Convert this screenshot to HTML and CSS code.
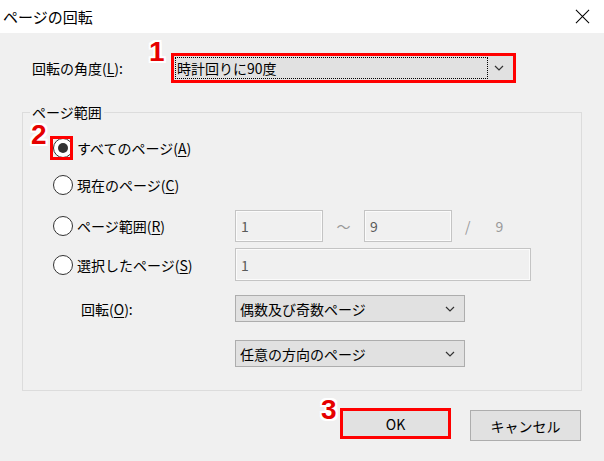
FILE: index.html
```html
<!DOCTYPE html>
<html>
<head>
    <meta charset="utf-8">
    <link rel="stylesheet" href="styles.css">
</head>
<body>
    <div class="titlebar">
        <span class="title">ページの回転</span>
        <svg class="close" viewBox="0 0 16 16"><path d="M1 1L15 15M15 1L1 15" stroke="#000" stroke-width="1.1" fill="none"/></svg>
    </div>

    <div class="body">
        <div class="angle-row">
            <span class="angle-label">回転の角度(<u>L</u>):</span>
            <div class="select-main">
                <span class="mark mark-1">1</span>
                <div class="focus-rect">時計回りに90度</div>
                <svg class="chevron" viewBox="0 0 10 6"><path d="M1 1L5 5L9 1" stroke="#333" stroke-width="1.2" fill="none"/></svg>
            </div>
        </div>

        <fieldset class="group">
            <legend>ページ範囲</legend>

            <div class="opt-row row-all">
                <div class="choice">
                    <span class="radio-slot marked">
                        <span class="mark mark-2">2</span>
                        <span class="radio checked"></span>
                    </span>
                    <span class="radio-label">すべてのページ(<u>A</u>)</span>
                </div>
            </div>

            <div class="opt-row row-current">
                <div class="choice">
                    <span class="radio-slot"><span class="radio"></span></span>
                    <span class="radio-label">現在のページ(<u>C</u>)</span>
                </div>
            </div>

            <div class="opt-row row-range">
                <div class="choice">
                    <span class="radio-slot"><span class="radio"></span></span>
                    <span class="radio-label">ページ範囲(<u>R</u>)</span>
                </div>
                <div class="field field-short">1</div>
                <span class="tilde">～</span>
                <div class="field field-short">9</div>
                <span class="slash">/</span>
                <span class="total">9</span>
            </div>

            <div class="opt-row row-select">
                <div class="choice">
                    <span class="radio-slot"><span class="radio"></span></span>
                    <span class="radio-label">選択したページ(<u>S</u>)</span>
                </div>
                <div class="field field-long">1</div>
            </div>

            <div class="opt-row row-rotate">
                <div class="choice">
                    <span class="rotate-label">回転(<u>O</u>):</span>
                </div>
                <div class="combo">
                    <span>偶数及び奇数ページ</span>
                    <svg class="chevron" viewBox="0 0 10 6"><path d="M1 1L5 5L9 1" stroke="#333" stroke-width="1.2" fill="none"/></svg>
                </div>
            </div>

            <div class="opt-row row-direction">
                <div class="choice"></div>
                <div class="combo">
                    <span>任意の方向のページ</span>
                    <svg class="chevron" viewBox="0 0 10 6"><path d="M1 1L5 5L9 1" stroke="#333" stroke-width="1.2" fill="none"/></svg>
                </div>
            </div>
        </fieldset>

        <div class="buttons">
            <button class="btn btn-ok"><span class="mark mark-3">3</span>OK</button>
            <button class="btn btn-cancel">キャンセル</button>
        </div>
    </div>
</body>
</html>
```

FILE: styles.css
```css
body {
    margin: 0;
    background-color: #f0f0f0;
    font-family: "Noto Sans CJK JP", "Liberation Sans", sans-serif;
    font-size: 14px;
    color: #000;
}
u {
    text-decoration-thickness: 1px;
    text-underline-offset: 2px;
}

/* title bar */
.titlebar {
    height: 33px;
    background-color: #fff;
    display: flex;
    align-items: center;
    justify-content: space-between;
    padding: 0 14px 0 3px;
}
.title {
    font-size: 15px;
}
.close {
    width: 15px;
    height: 15px;
}

.body {
    padding-top: 20px;
}

/* annotation numbers */
.mark {
    position: absolute;
    font-family: "Liberation Sans", sans-serif;
    font-weight: bold;
    font-size: 28px;
    line-height: 20px;
    color: #e60000;
    text-shadow:
        2px 0 0 #fff, -2px 0 0 #fff, 0 2px 0 #fff, 0 -2px 0 #fff,
        2px 2px 0 #fff, -2px -2px 0 #fff, 2px -2px 0 #fff, -2px 2px 0 #fff;
    z-index: 2;
}
.mark-1 {
    left: -25px;
    top: -14px;
}
.mark-2 {
    left: -19px;
    top: -11px;
}
.mark-3 {
    left: -22px;
    top: -11px;
}

/* angle row */
.angle-row {
    display: flex;
    align-items: center;
    height: 30px;
    padding-left: 32px;
}
.angle-label {
    width: 139px;
}
.select-main {
    position: relative;
    width: 345px;
    height: 30px;
    box-sizing: border-box;
    border: 3px solid #ff0000;
    background-color: #e1e1e1;
    display: flex;
    align-items: center;
}
.focus-rect {
    margin-left: 1px;
    width: 313px;
    height: 22px;
    box-sizing: border-box;
    border: 1px dotted #000;
    line-height: 20px;
    padding-left: 1px;
}
.chevron {
    width: 10px;
    height: 6px;
    margin-left: auto;
    margin-right: 9px;
}

/* range group */
.group {
    margin: 19px 22px 0;
    padding: 11px 0 23px 27px;
    border: 1px solid #dcdcdc;
    min-width: 0;
}
.group legend {
    margin-left: -20px;
    padding: 0 2px;
    line-height: 20px;
}
.opt-row {
    display: flex;
    align-items: center;
    height: 30px;
}
.row-current {
    margin-top: 7px;
}
.row-range {
    margin-top: 10px;
    height: 32px;
}
.row-select {
    margin-top: 6px;
    height: 33px;
}
.row-rotate {
    margin-top: 14px;
    height: 27px;
}
.row-direction {
    margin-top: 18px;
    height: 27px;
}
.choice {
    width: 185px;
    flex: none;
    display: flex;
    align-items: center;
}
.radio-slot {
    position: relative;
    width: 23px;
    height: 24px;
    flex: none;
}
.radio {
    position: absolute;
    left: 3px;
    top: 2px;
    width: 20px;
    height: 20px;
    box-sizing: border-box;
    border: 1px solid #333;
    border-radius: 50%;
    background-color: #fff;
}
.radio.checked::after {
    content: "";
    position: absolute;
    left: 4px;
    top: 4px;
    width: 10px;
    height: 10px;
    border-radius: 50%;
    background-color: #333;
}
.radio-slot.marked::after {
    content: "";
    position: absolute;
    inset: 0;
    border: 3px solid #ff0000;
    z-index: 1;
}
.radio-label {
    margin-left: 4px;
}
.rotate-label {
    padding-left: 31px;
}

/* text fields */
.field {
    height: 100%;
    box-sizing: border-box;
    border: 1px solid #c4c4c4;
    box-shadow: inset 0 0 0 1px #fbfbfb;
    padding-left: 5px;
    display: flex;
    align-items: center;
    color: #5a5a5a;
}
.field-short {
    width: 88px;
}
.field-long {
    width: 296px;
}
.tilde {
    width: 41px;
    text-align: center;
    color: #999;
}
.slash {
    margin-left: 13px;
    color: #999;
}
.total {
    margin-left: 25px;
    color: #999;
}

/* combo boxes */
.combo {
    width: 230px;
    height: 27px;
    box-sizing: border-box;
    border: 1px solid #adadad;
    background-color: #e1e1e1;
    display: flex;
    align-items: center;
    padding-left: 4px;
}

/* buttons */
.buttons {
    display: flex;
    justify-content: flex-end;
    align-items: flex-start;
    gap: 19px;
    padding-right: 23px;
    margin-top: 17px;
}
.btn {
    position: relative;
    width: 111px;
    height: 31px;
    box-sizing: border-box;
    border: 1px solid #adadad;
    background-color: #e1e1e1;
    font-family: "Noto Sans CJK JP", "Liberation Sans", sans-serif;
    font-size: 14px;
    color: #000;
    padding: 0;
}
.btn-ok {
    border: 3px solid #ff0000;
}
.btn-cancel {
    margin-top: 2px;
}
```
